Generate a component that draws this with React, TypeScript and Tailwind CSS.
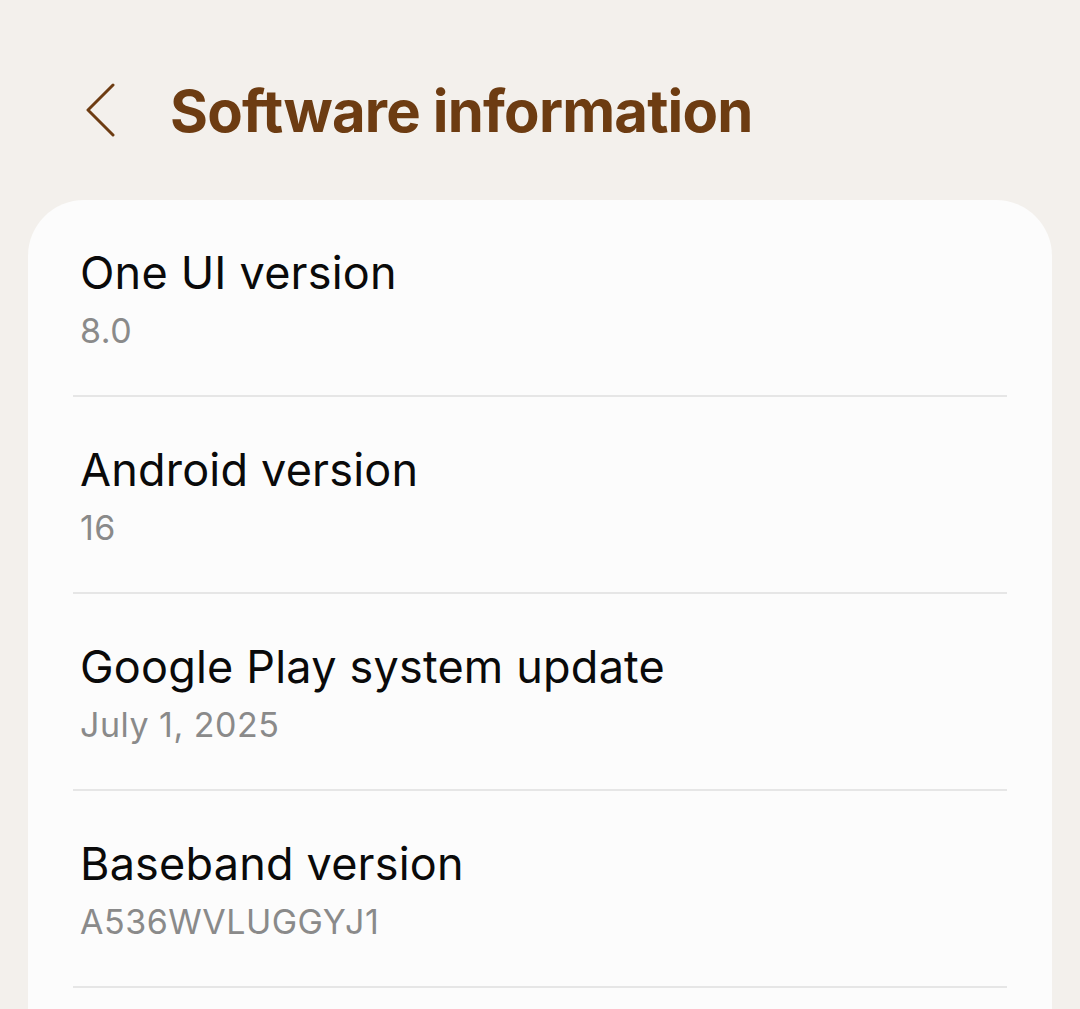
import React from "react";

const rows = [
  { title: "One UI version", value: "8.0" },
  { title: "Android version", value: "16" },
  { title: "Google Play system update", value: "July 1, 2025" },
  { title: "Baseband version", value: "A536WVLUGGYJ1" },
];

export default function App() {
  return (
    <div
      className="w-[1080px] h-[1009px] overflow-hidden bg-[#f3f0ec]"
      style={{ fontFamily: "Inter, 'Noto Sans', sans-serif" }}
    >
      <header className="h-[200px] flex items-start pt-[76px]">
        <div className="w-[170px] flex pl-[85px] pt-[7px]">
          <svg width="30" height="54" viewBox="0 0 30 54" fill="none">
            <polyline
              points="28,2 3,27 28,52"
              stroke="#6d3c12"
              strokeWidth="3"
              strokeLinecap="round"
              strokeLinejoin="round"
            />
          </svg>
        </div>
        <h1 className="text-[58px] leading-[70px] font-bold text-[#6d3c12] tracking-[-0.8px]">
          Software information
        </h1>
      </header>
      <main className="mx-[28px] bg-[#fcfcfc] rounded-t-[56px] h-[900px]">
        {rows.map((r) => (
          <div key={r.title} className="h-[197px] px-[45px] flex flex-col">
            <div className="flex-1 flex flex-col pl-[7px] pt-[46px]">
              <div className="text-[45px] leading-[54px] text-[#0a0a0a] tracking-[0.2px]">
                {r.title}
              </div>
              <div className="mt-[10px] text-[34px] leading-[41px] text-[#8a8a8a] tracking-[0.5px]">
                {r.value}
              </div>
            </div>
            <div className="h-[2px] bg-[#e6e6e6]" />
          </div>
        ))}
      </main>
    </div>
  );
}
